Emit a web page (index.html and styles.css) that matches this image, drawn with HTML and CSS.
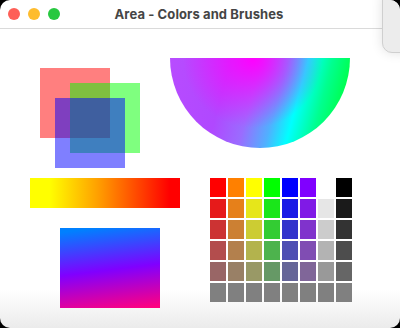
FILE: index.html
```html
<!DOCTYPE html>
<html lang="en">
<head>
<meta charset="UTF-8">
<meta name="viewport" content="width=device-width, initial-scale=1.0">
<title>Area - Colors and Brushes</title>
<link rel="stylesheet" href="styles.css">
</head>
<body>
<div class="window">
    <div class="titlebar">
        <div class="lights">
            <span class="light red"></span>
            <span class="light yellow"></span>
            <span class="light green"></span>
        </div>
        <div class="title">Area - Colors and Brushes</div>
    </div>

    <div class="canvas">
        <div class="row top-row">
            <div class="squares">
                <div class="square sq-red"></div>
                <div class="square sq-green"></div>
                <div class="square sq-blue"></div>
            </div>
            <div class="half-disc"></div>
        </div>

        <div class="row bottom-row">
            <div class="left-col">
                <div class="bar"></div>
                <div class="grad-box"></div>
            </div>
            <div class="palette" id="palette"></div>
        </div>
    </div>

    <div class="other-window"></div>
</div>

<script>
    // Palette rows, fading each hue toward gray
    const hues = [
        [255, 0, 0], [255, 128, 0], [255, 255, 0], [0, 255, 0],
        [0, 0, 255], [128, 0, 255], [255, 255, 255], [0, 0, 0]
    ];
    const palette = document.getElementById("palette");

    for (let row = 0; row < 6; row++) {
        const t = row / 5;
        hues.forEach((hue, index) => {
            const cell = document.createElement("div");
            cell.className = "cell";
            if (row === 0 && index === 6) {
                cell.classList.add("empty");
            } else {
                const c = hue.map(v => Math.round(v + (128 - v) * t));
                cell.style.backgroundColor = `rgb(${c[0]}, ${c[1]}, ${c[2]})`;
            }
            palette.appendChild(cell);
        });
    }
</script>
</body>
</html>
```

FILE: styles.css
```css
body {
    margin: 0;
    background-color: #000;
    font-family: Inter, "Liberation Sans", sans-serif;
}

.window {
    position: relative;
    width: 400px;
    height: 328px;
    border-radius: 10px;
    overflow: hidden;
    background: linear-gradient(#fff 0, #fff 290px, #ebebeb 328px);
}

.titlebar {
    position: relative;
    height: 28px;
    border-bottom: 1px solid #dadada;
    display: flex;
    align-items: center;
    justify-content: center;
}

.lights {
    position: absolute;
    left: 8px;
    top: 8px;
    display: flex;
    gap: 8px;
}

.light {
    width: 12px;
    height: 12px;
    border-radius: 50%;
}

.red { background-color: #fe5f57; }
.yellow { background-color: #febc2e; }
.green { background-color: #28c840; }

.title {
    font-size: 13px;
    font-weight: 700;
    color: #454545;
    margin-left: -2px;
    letter-spacing: 0.1px;
}

.row {
    display: flex;
}

.top-row {
    padding-top: 29px;
}

.squares {
    position: relative;
    width: 100px;
    height: 100px;
    margin: 10px 0 0 40px;
}

.square {
    position: absolute;
    width: 70px;
    height: 70px;
}

.sq-red { left: 0; top: 0; background-color: rgba(255, 0, 0, 0.5); }
.sq-green { left: 30px; top: 15px; background-color: rgba(0, 255, 0, 0.5); }
.sq-blue { left: 15px; top: 30px; background-color: rgba(0, 0, 255, 0.5); }

.half-disc {
    width: 180px;
    height: 90px;
    margin-left: 30px;
    border-radius: 0 0 90px 90px;
    background:
        radial-gradient(ellipse 70px 70px at 46% 0%, #ff00ff, rgba(255, 0, 255, 0)),
        linear-gradient(105deg, #b84cff 0%, #b048ff 30%, #9a6cff 45%, #50b0ff 58%, #00ffff 68%, #00ff90 80%, #00ff30 95%);
}

.bottom-row {
    margin-top: 10px;
}

.left-col {
    display: flex;
    flex-direction: column;
    margin-left: 30px;
}

.bar {
    width: 150px;
    height: 30px;
    background: linear-gradient(90deg, #ffff00 13%, #ffa000 45%, #ff0000 93%);
}

.grad-box {
    width: 100px;
    height: 80px;
    margin: 20px 0 0 30px;
    background: linear-gradient(173deg, #0080ff 5%, #8000ff 52%, #ff0080 98%);
}

.palette {
    margin-left: 30px;
    display: grid;
    grid-template-columns: repeat(8, 16px);
    grid-auto-rows: 19px;
    gap: 2px;
}

.cell.empty {
    background-color: transparent;
}

.other-window {
    position: absolute;
    left: 382px;
    top: -10px;
    width: 40px;
    height: 61px;
    background-color: #ececec;
    border: 1px solid #cfcfcf;
    border-radius: 10px;
    box-shadow: 0 0 12px rgba(0, 0, 0, 0.12);
}
```
